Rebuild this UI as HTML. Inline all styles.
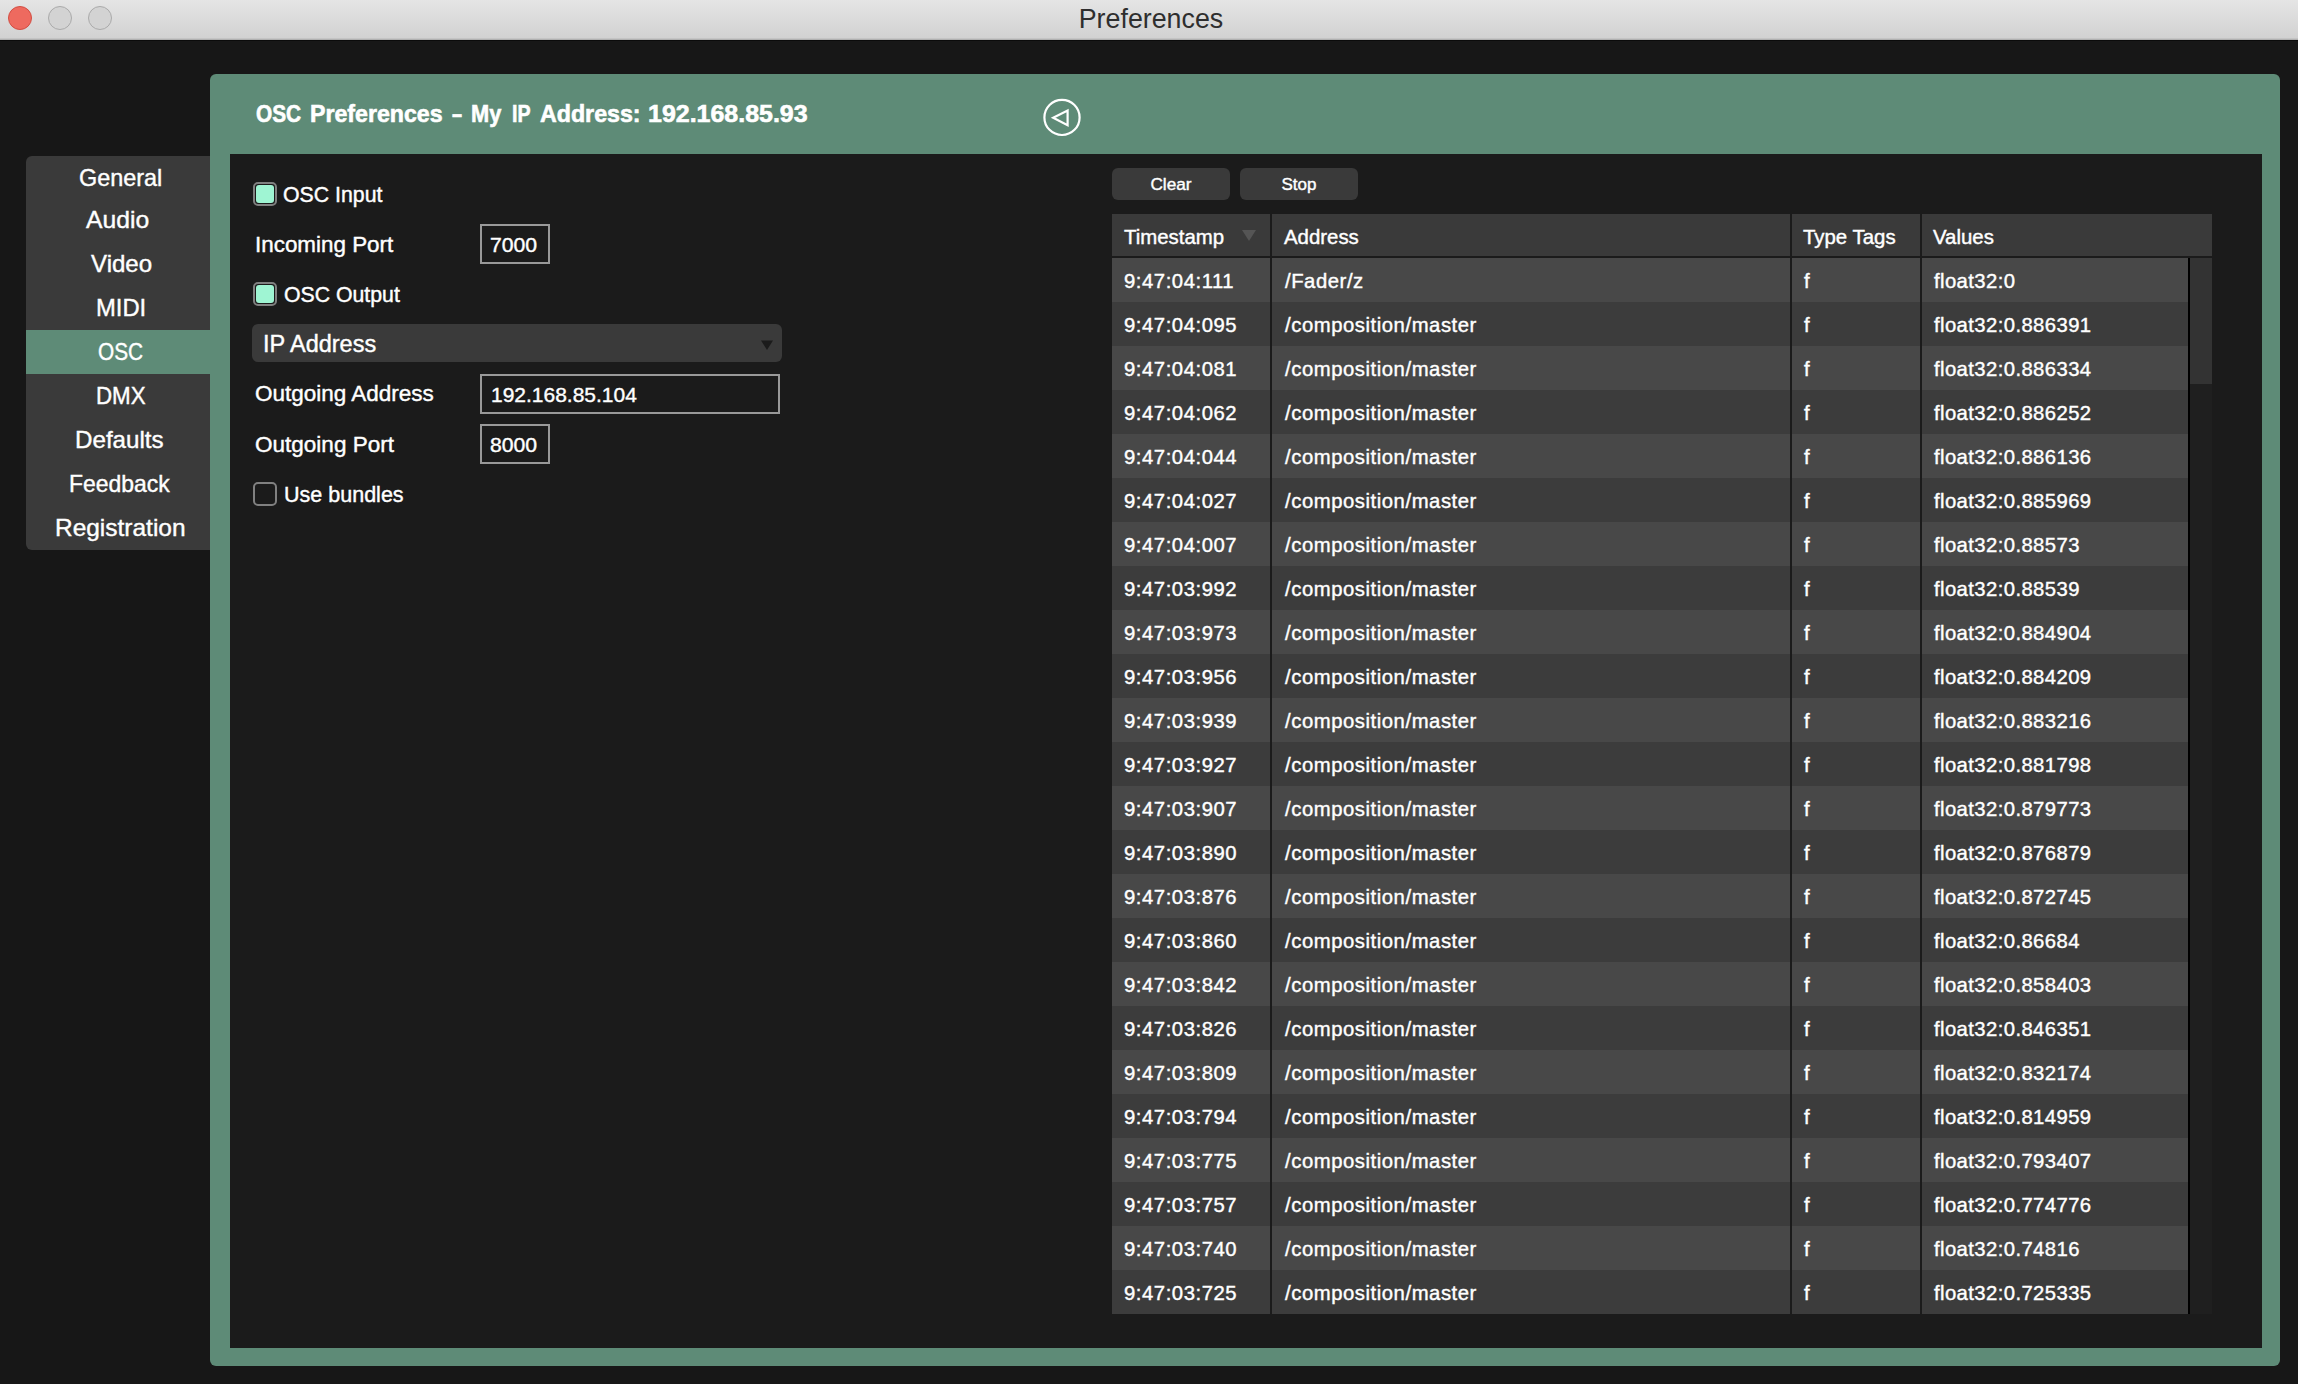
<!DOCTYPE html>
<html><head><meta charset="utf-8"><style>
html,body{margin:0;padding:0;}
body{width:2298px;height:1384px;background:#171717;position:relative;overflow:hidden;font-family:"Liberation Sans",sans-serif;}
.t{position:absolute;line-height:1;white-space:pre;-webkit-text-stroke:0.4px currentColor;}
.r{position:absolute;}
</style></head><body>
<div class="r" style="left:0;top:0;width:2298px;height:38px;background:linear-gradient(#e5e5e5,#d2d2d2)"></div>
<div class="r" style="left:0px;top:38px;width:2298px;height:1px;background:#c4c4c4;"></div>
<div class="r" style="left:0px;top:39px;width:2298px;height:1px;background:#b0b0b0;"></div>
<div class="r" style="left:0px;top:40px;width:2298px;height:1px;background:#0b0b0b;"></div>
<div class="r" style="left:8px;top:6px;width:22px;height:22px;border-radius:50%;background:#ee6a5f;border:1px solid #d24e43"></div>
<div class="r" style="left:48px;top:6px;width:22px;height:22px;border-radius:50%;background:#d3d3d3;border:1px solid #aaaaaa"></div>
<div class="r" style="left:88px;top:6px;width:22px;height:22px;border-radius:50%;background:#d3d3d3;border:1px solid #aaaaaa"></div>
<div class="t" style="left:851.00px;width:600px;text-align:center;top:5.91px;font-size:26.8px;color:#2e2e2e;font-weight:normal;-webkit-text-stroke:0;">Preferences</div>
<div class="r" style="left:210px;top:74px;width:2070px;height:1292px;background:#5e8b77;border-radius:6px;"></div>
<div class="r" style="left:230px;top:154px;width:2032px;height:1194px;background:#1b1b1b;"></div>
<div class="t" style="left:256.30px;top:101.68px;font-size:24px;color:#fff;font-weight:bold;-webkit-text-stroke:0.6px currentColor;transform:scaleX(0.8673);transform-origin:0 0;">OSC</div>
<div class="t" style="left:309.54px;top:101.68px;font-size:24px;color:#fff;font-weight:bold;-webkit-text-stroke:0.6px currentColor;transform:scaleX(0.9647);transform-origin:0 0;">Preferences</div>
<div class="t" style="left:452.10px;top:101.68px;font-size:24px;color:#fff;font-weight:bold;-webkit-text-stroke:0.6px currentColor;transform:scaleX(0.7538);transform-origin:0 0;">–</div>
<div class="t" style="left:471.49px;top:101.68px;font-size:24px;color:#fff;font-weight:bold;-webkit-text-stroke:0.6px currentColor;transform:scaleX(0.9091);transform-origin:0 0;">My</div>
<div class="t" style="left:512.18px;top:101.68px;font-size:24px;color:#fff;font-weight:bold;-webkit-text-stroke:0.6px currentColor;transform:scaleX(0.8182);transform-origin:0 0;">IP</div>
<div class="t" style="left:539.60px;top:101.68px;font-size:24px;color:#fff;font-weight:bold;-webkit-text-stroke:0.6px currentColor;transform:scaleX(0.9667);transform-origin:0 0;">Address:</div>
<div class="t" style="left:647.56px;top:101.68px;font-size:24px;color:#fff;font-weight:bold;-webkit-text-stroke:0.6px currentColor;transform:scaleX(1.0401);transform-origin:0 0;">192.168.85.93</div>
<svg class="r" style="left:1040px;top:95px" width="44" height="44" viewBox="0 0 44 44"><circle cx="22" cy="22.4" r="17.6" fill="none" stroke="#fff" stroke-width="2.2"/><path d="M13.2 22.8 L27.6 15.6 L27.6 30.2 Z" fill="none" stroke="#fff" stroke-width="2.2" stroke-linejoin="miter"/></svg>
<div class="r" style="left:26px;top:156px;width:184px;height:394px;background:#3a3a3a;border-radius:6px 0 0 6px;"></div>
<div class="r" style="left:26px;top:330px;width:184px;height:44px;background:#5e8b77;"></div>
<div class="t" style="left:79.02px;top:165.68px;font-size:24px;color:#fff;font-weight:normal;-webkit-text-stroke:0.4px currentColor;transform:scaleX(0.9759);transform-origin:0 0;">General</div>
<div class="t" style="left:86.10px;top:207.68px;font-size:24px;color:#fff;font-weight:normal;-webkit-text-stroke:0.4px currentColor;transform:scaleX(1.0279);transform-origin:0 0;">Audio</div>
<div class="t" style="left:90.80px;top:251.68px;font-size:24px;color:#fff;font-weight:normal;-webkit-text-stroke:0.4px currentColor;transform:scaleX(1.0033);transform-origin:0 0;">Video</div>
<div class="t" style="left:95.72px;top:295.68px;font-size:24px;color:#fff;font-weight:normal;-webkit-text-stroke:0.4px currentColor;transform:scaleX(0.9915);transform-origin:0 0;">MIDI</div>
<div class="t" style="left:98.13px;top:339.68px;font-size:24px;color:#fff;font-weight:normal;-webkit-text-stroke:0.4px currentColor;transform:scaleX(0.8660);transform-origin:0 0;">OSC</div>
<div class="t" style="left:95.54px;top:383.68px;font-size:24px;color:#fff;font-weight:normal;-webkit-text-stroke:0.4px currentColor;transform:scaleX(0.9294);transform-origin:0 0;">DMX</div>
<div class="t" style="left:75.49px;top:427.68px;font-size:24px;color:#fff;font-weight:normal;-webkit-text-stroke:0.4px currentColor;transform:scaleX(1.0070);transform-origin:0 0;">Defaults</div>
<div class="t" style="left:69.49px;top:471.68px;font-size:24px;color:#fff;font-weight:normal;-webkit-text-stroke:0.4px currentColor;transform:scaleX(0.9558);transform-origin:0 0;">Feedback</div>
<div class="t" style="left:55.06px;top:515.68px;font-size:24px;color:#fff;font-weight:normal;-webkit-text-stroke:0.4px currentColor;transform:scaleX(1.0192);transform-origin:0 0;">Registration</div>
<div class="r" style="left:253px;top:182px;width:20px;height:20px;border:2px solid #808080;border-radius:5px;background:#1b1b1b"><div style="position:absolute;left:1px;top:1px;width:18px;height:18px;border-radius:3px;background:#9ff5d3"></div></div>
<div class="t" style="left:283.29px;top:184.35px;font-size:21.2px;color:#fff;font-weight:normal;-webkit-text-stroke:0.4px currentColor;transform:scaleX(1.0051);transform-origin:0 0;">OSC Input</div>
<div class="t" style="left:254.66px;top:233.57px;font-size:22px;color:#fff;font-weight:normal;-webkit-text-stroke:0.4px currentColor;transform:scaleX(1.0187);transform-origin:0 0;">Incoming Port</div>
<div class="r" style="left:480px;top:224px;width:70px;height:40px;background:#1b1b1b;box-sizing:border-box;border:2px solid #999999;"></div>
<div class="t" style="left:490.39px;top:234.42px;font-size:21px;color:#fff;font-weight:normal;-webkit-text-stroke:0.4px currentColor;transform:scaleX(1.0089);transform-origin:0 0;">7000</div>
<div class="r" style="left:253px;top:282px;width:20px;height:20px;border:2px solid #808080;border-radius:5px;background:#1b1b1b"><div style="position:absolute;left:1px;top:1px;width:18px;height:18px;border-radius:3px;background:#9ff5d3"></div></div>
<div class="t" style="left:283.70px;top:284.05px;font-size:21.2px;color:#fff;font-weight:normal;-webkit-text-stroke:0.4px currentColor;transform:scaleX(1.0035);transform-origin:0 0;">OSC Output</div>
<div class="r" style="left:252px;top:324px;width:530px;height:38px;background:#3a3a3a;border-radius:6px;"></div>
<div class="t" style="left:262.86px;top:332.53px;font-size:23px;color:#fff;font-weight:normal;-webkit-text-stroke:0.4px currentColor;transform:scaleX(1.0213);transform-origin:0 0;">IP Address</div>
<svg class="r" style="left:760px;top:339px" width="14" height="12" viewBox="0 0 14 12"><path d="M1 1.5 L13 1.5 L7 11 Z" fill="#1b1b1b"/></svg>
<div class="t" style="left:255.39px;top:383.32px;font-size:22.3px;color:#fff;font-weight:normal;-webkit-text-stroke:0.4px currentColor;transform:scaleX(1.0091);transform-origin:0 0;">Outgoing Address</div>
<div class="r" style="left:480px;top:374px;width:300px;height:40px;background:#1b1b1b;box-sizing:border-box;border:2px solid #999999;"></div>
<div class="t" style="left:490.70px;top:384.02px;font-size:21px;color:#fff;font-weight:normal;-webkit-text-stroke:0.4px currentColor;transform:scaleX(0.9993);transform-origin:0 0;">192.168.85.104</div>
<div class="t" style="left:255.28px;top:433.67px;font-size:22px;color:#fff;font-weight:normal;-webkit-text-stroke:0.4px currentColor;transform:scaleX(1.0237);transform-origin:0 0;">Outgoing Port</div>
<div class="r" style="left:480px;top:424px;width:70px;height:40px;background:#1b1b1b;box-sizing:border-box;border:2px solid #999999;"></div>
<div class="t" style="left:489.89px;top:434.02px;font-size:21px;color:#fff;font-weight:normal;-webkit-text-stroke:0.4px currentColor;transform:scaleX(1.0089);transform-origin:0 0;">8000</div>
<div class="r" style="left:253px;top:482px;width:20px;height:20px;border:2px solid #808080;border-radius:5px;background:#1b1b1b"><div style="position:absolute;left:1px;top:1px;width:18px;height:18px;border-radius:3px;background:transparent"></div></div>
<div class="t" style="left:283.78px;top:484.05px;font-size:21.2px;color:#fff;font-weight:normal;-webkit-text-stroke:0.4px currentColor;transform:scaleX(1.0154);transform-origin:0 0;">Use bundles</div>
<div class="r" style="left:1112px;top:168px;width:118px;height:32px;background:#3a3a3a;border-radius:6px;"></div>
<div class="t" style="left:871.00px;width:600px;text-align:center;top:175.94px;font-size:17.2px;color:#fff;font-weight:normal;">Clear</div>
<div class="r" style="left:1240px;top:168px;width:118px;height:32px;background:#3a3a3a;border-radius:6px;"></div>
<div class="t" style="left:999.00px;width:600px;text-align:center;top:176.11px;font-size:17px;color:#fff;font-weight:normal;">Stop</div>
<div class="r" style="left:1112px;top:214px;width:1100px;height:42px;background:#3a3a3a;"></div>
<div class="r" style="left:1112px;top:256px;width:1076px;height:2px;background:#1b1b1b;"></div>
<div class="r" style="left:1270px;top:214px;width:2px;height:1100px;background:#1b1b1b;"></div>
<div class="r" style="left:1790px;top:214px;width:2px;height:1100px;background:#1b1b1b;"></div>
<div class="r" style="left:1920px;top:214px;width:2px;height:1100px;background:#1b1b1b;"></div>
<div class="t" style="left:1124.00px;top:226.73px;font-size:20.4px;color:#fff;font-weight:normal;">Timestamp</div>
<svg class="r" style="left:1241px;top:229px" width="16" height="13" viewBox="0 0 16 13"><path d="M1 1 L15 1 L8 12 Z" fill="#555"/></svg>
<div class="t" style="left:1284.00px;top:226.73px;font-size:20.4px;color:#fff;font-weight:normal;">Address</div>
<div class="t" style="left:1803.00px;top:226.73px;font-size:20.4px;color:#fff;font-weight:normal;">Type Tags</div>
<div class="t" style="left:1933.00px;top:226.73px;font-size:20.4px;color:#fff;font-weight:normal;">Values</div>
<div class="r" style="left:1112px;top:258px;width:158px;height:44px;background:#484848;"></div>
<div class="r" style="left:1272px;top:258px;width:518px;height:44px;background:#484848;"></div>
<div class="r" style="left:1792px;top:258px;width:128px;height:44px;background:#484848;"></div>
<div class="r" style="left:1922px;top:258px;width:266px;height:44px;background:#484848;"></div>
<div class="t" style="left:1124.00px;top:270.81px;font-size:20.3px;color:#fff;font-weight:normal;letter-spacing:0.55px;">9:47:04:111</div>
<div class="t" style="left:1285.00px;top:270.81px;font-size:20.3px;color:#fff;font-weight:normal;letter-spacing:0.55px;">/Fader/z</div>
<div class="t" style="left:1804.00px;top:270.81px;font-size:20.3px;color:#fff;font-weight:normal;letter-spacing:0.55px;">f</div>
<div class="t" style="left:1934.00px;top:270.81px;font-size:20.3px;color:#fff;font-weight:normal;letter-spacing:0.4px;">float32:0</div>
<div class="r" style="left:1112px;top:302px;width:158px;height:44px;background:#3c3c3c;"></div>
<div class="r" style="left:1272px;top:302px;width:518px;height:44px;background:#3c3c3c;"></div>
<div class="r" style="left:1792px;top:302px;width:128px;height:44px;background:#3c3c3c;"></div>
<div class="r" style="left:1922px;top:302px;width:266px;height:44px;background:#3c3c3c;"></div>
<div class="t" style="left:1124.00px;top:314.81px;font-size:20.3px;color:#fff;font-weight:normal;letter-spacing:0.55px;">9:47:04:095</div>
<div class="t" style="left:1285.00px;top:314.81px;font-size:20.3px;color:#fff;font-weight:normal;letter-spacing:0.55px;">/composition/master</div>
<div class="t" style="left:1804.00px;top:314.81px;font-size:20.3px;color:#fff;font-weight:normal;letter-spacing:0.55px;">f</div>
<div class="t" style="left:1934.00px;top:314.81px;font-size:20.3px;color:#fff;font-weight:normal;letter-spacing:0.4px;">float32:0.886391</div>
<div class="r" style="left:1112px;top:346px;width:158px;height:44px;background:#484848;"></div>
<div class="r" style="left:1272px;top:346px;width:518px;height:44px;background:#484848;"></div>
<div class="r" style="left:1792px;top:346px;width:128px;height:44px;background:#484848;"></div>
<div class="r" style="left:1922px;top:346px;width:266px;height:44px;background:#484848;"></div>
<div class="t" style="left:1124.00px;top:358.81px;font-size:20.3px;color:#fff;font-weight:normal;letter-spacing:0.55px;">9:47:04:081</div>
<div class="t" style="left:1285.00px;top:358.81px;font-size:20.3px;color:#fff;font-weight:normal;letter-spacing:0.55px;">/composition/master</div>
<div class="t" style="left:1804.00px;top:358.81px;font-size:20.3px;color:#fff;font-weight:normal;letter-spacing:0.55px;">f</div>
<div class="t" style="left:1934.00px;top:358.81px;font-size:20.3px;color:#fff;font-weight:normal;letter-spacing:0.4px;">float32:0.886334</div>
<div class="r" style="left:1112px;top:390px;width:158px;height:44px;background:#3c3c3c;"></div>
<div class="r" style="left:1272px;top:390px;width:518px;height:44px;background:#3c3c3c;"></div>
<div class="r" style="left:1792px;top:390px;width:128px;height:44px;background:#3c3c3c;"></div>
<div class="r" style="left:1922px;top:390px;width:266px;height:44px;background:#3c3c3c;"></div>
<div class="t" style="left:1124.00px;top:402.81px;font-size:20.3px;color:#fff;font-weight:normal;letter-spacing:0.55px;">9:47:04:062</div>
<div class="t" style="left:1285.00px;top:402.81px;font-size:20.3px;color:#fff;font-weight:normal;letter-spacing:0.55px;">/composition/master</div>
<div class="t" style="left:1804.00px;top:402.81px;font-size:20.3px;color:#fff;font-weight:normal;letter-spacing:0.55px;">f</div>
<div class="t" style="left:1934.00px;top:402.81px;font-size:20.3px;color:#fff;font-weight:normal;letter-spacing:0.4px;">float32:0.886252</div>
<div class="r" style="left:1112px;top:434px;width:158px;height:44px;background:#484848;"></div>
<div class="r" style="left:1272px;top:434px;width:518px;height:44px;background:#484848;"></div>
<div class="r" style="left:1792px;top:434px;width:128px;height:44px;background:#484848;"></div>
<div class="r" style="left:1922px;top:434px;width:266px;height:44px;background:#484848;"></div>
<div class="t" style="left:1124.00px;top:446.81px;font-size:20.3px;color:#fff;font-weight:normal;letter-spacing:0.55px;">9:47:04:044</div>
<div class="t" style="left:1285.00px;top:446.81px;font-size:20.3px;color:#fff;font-weight:normal;letter-spacing:0.55px;">/composition/master</div>
<div class="t" style="left:1804.00px;top:446.81px;font-size:20.3px;color:#fff;font-weight:normal;letter-spacing:0.55px;">f</div>
<div class="t" style="left:1934.00px;top:446.81px;font-size:20.3px;color:#fff;font-weight:normal;letter-spacing:0.4px;">float32:0.886136</div>
<div class="r" style="left:1112px;top:478px;width:158px;height:44px;background:#3c3c3c;"></div>
<div class="r" style="left:1272px;top:478px;width:518px;height:44px;background:#3c3c3c;"></div>
<div class="r" style="left:1792px;top:478px;width:128px;height:44px;background:#3c3c3c;"></div>
<div class="r" style="left:1922px;top:478px;width:266px;height:44px;background:#3c3c3c;"></div>
<div class="t" style="left:1124.00px;top:490.81px;font-size:20.3px;color:#fff;font-weight:normal;letter-spacing:0.55px;">9:47:04:027</div>
<div class="t" style="left:1285.00px;top:490.81px;font-size:20.3px;color:#fff;font-weight:normal;letter-spacing:0.55px;">/composition/master</div>
<div class="t" style="left:1804.00px;top:490.81px;font-size:20.3px;color:#fff;font-weight:normal;letter-spacing:0.55px;">f</div>
<div class="t" style="left:1934.00px;top:490.81px;font-size:20.3px;color:#fff;font-weight:normal;letter-spacing:0.4px;">float32:0.885969</div>
<div class="r" style="left:1112px;top:522px;width:158px;height:44px;background:#484848;"></div>
<div class="r" style="left:1272px;top:522px;width:518px;height:44px;background:#484848;"></div>
<div class="r" style="left:1792px;top:522px;width:128px;height:44px;background:#484848;"></div>
<div class="r" style="left:1922px;top:522px;width:266px;height:44px;background:#484848;"></div>
<div class="t" style="left:1124.00px;top:534.81px;font-size:20.3px;color:#fff;font-weight:normal;letter-spacing:0.55px;">9:47:04:007</div>
<div class="t" style="left:1285.00px;top:534.81px;font-size:20.3px;color:#fff;font-weight:normal;letter-spacing:0.55px;">/composition/master</div>
<div class="t" style="left:1804.00px;top:534.81px;font-size:20.3px;color:#fff;font-weight:normal;letter-spacing:0.55px;">f</div>
<div class="t" style="left:1934.00px;top:534.81px;font-size:20.3px;color:#fff;font-weight:normal;letter-spacing:0.4px;">float32:0.88573</div>
<div class="r" style="left:1112px;top:566px;width:158px;height:44px;background:#3c3c3c;"></div>
<div class="r" style="left:1272px;top:566px;width:518px;height:44px;background:#3c3c3c;"></div>
<div class="r" style="left:1792px;top:566px;width:128px;height:44px;background:#3c3c3c;"></div>
<div class="r" style="left:1922px;top:566px;width:266px;height:44px;background:#3c3c3c;"></div>
<div class="t" style="left:1124.00px;top:578.81px;font-size:20.3px;color:#fff;font-weight:normal;letter-spacing:0.55px;">9:47:03:992</div>
<div class="t" style="left:1285.00px;top:578.81px;font-size:20.3px;color:#fff;font-weight:normal;letter-spacing:0.55px;">/composition/master</div>
<div class="t" style="left:1804.00px;top:578.81px;font-size:20.3px;color:#fff;font-weight:normal;letter-spacing:0.55px;">f</div>
<div class="t" style="left:1934.00px;top:578.81px;font-size:20.3px;color:#fff;font-weight:normal;letter-spacing:0.4px;">float32:0.88539</div>
<div class="r" style="left:1112px;top:610px;width:158px;height:44px;background:#484848;"></div>
<div class="r" style="left:1272px;top:610px;width:518px;height:44px;background:#484848;"></div>
<div class="r" style="left:1792px;top:610px;width:128px;height:44px;background:#484848;"></div>
<div class="r" style="left:1922px;top:610px;width:266px;height:44px;background:#484848;"></div>
<div class="t" style="left:1124.00px;top:622.81px;font-size:20.3px;color:#fff;font-weight:normal;letter-spacing:0.55px;">9:47:03:973</div>
<div class="t" style="left:1285.00px;top:622.81px;font-size:20.3px;color:#fff;font-weight:normal;letter-spacing:0.55px;">/composition/master</div>
<div class="t" style="left:1804.00px;top:622.81px;font-size:20.3px;color:#fff;font-weight:normal;letter-spacing:0.55px;">f</div>
<div class="t" style="left:1934.00px;top:622.81px;font-size:20.3px;color:#fff;font-weight:normal;letter-spacing:0.4px;">float32:0.884904</div>
<div class="r" style="left:1112px;top:654px;width:158px;height:44px;background:#3c3c3c;"></div>
<div class="r" style="left:1272px;top:654px;width:518px;height:44px;background:#3c3c3c;"></div>
<div class="r" style="left:1792px;top:654px;width:128px;height:44px;background:#3c3c3c;"></div>
<div class="r" style="left:1922px;top:654px;width:266px;height:44px;background:#3c3c3c;"></div>
<div class="t" style="left:1124.00px;top:666.81px;font-size:20.3px;color:#fff;font-weight:normal;letter-spacing:0.55px;">9:47:03:956</div>
<div class="t" style="left:1285.00px;top:666.81px;font-size:20.3px;color:#fff;font-weight:normal;letter-spacing:0.55px;">/composition/master</div>
<div class="t" style="left:1804.00px;top:666.81px;font-size:20.3px;color:#fff;font-weight:normal;letter-spacing:0.55px;">f</div>
<div class="t" style="left:1934.00px;top:666.81px;font-size:20.3px;color:#fff;font-weight:normal;letter-spacing:0.4px;">float32:0.884209</div>
<div class="r" style="left:1112px;top:698px;width:158px;height:44px;background:#484848;"></div>
<div class="r" style="left:1272px;top:698px;width:518px;height:44px;background:#484848;"></div>
<div class="r" style="left:1792px;top:698px;width:128px;height:44px;background:#484848;"></div>
<div class="r" style="left:1922px;top:698px;width:266px;height:44px;background:#484848;"></div>
<div class="t" style="left:1124.00px;top:710.81px;font-size:20.3px;color:#fff;font-weight:normal;letter-spacing:0.55px;">9:47:03:939</div>
<div class="t" style="left:1285.00px;top:710.81px;font-size:20.3px;color:#fff;font-weight:normal;letter-spacing:0.55px;">/composition/master</div>
<div class="t" style="left:1804.00px;top:710.81px;font-size:20.3px;color:#fff;font-weight:normal;letter-spacing:0.55px;">f</div>
<div class="t" style="left:1934.00px;top:710.81px;font-size:20.3px;color:#fff;font-weight:normal;letter-spacing:0.4px;">float32:0.883216</div>
<div class="r" style="left:1112px;top:742px;width:158px;height:44px;background:#3c3c3c;"></div>
<div class="r" style="left:1272px;top:742px;width:518px;height:44px;background:#3c3c3c;"></div>
<div class="r" style="left:1792px;top:742px;width:128px;height:44px;background:#3c3c3c;"></div>
<div class="r" style="left:1922px;top:742px;width:266px;height:44px;background:#3c3c3c;"></div>
<div class="t" style="left:1124.00px;top:754.81px;font-size:20.3px;color:#fff;font-weight:normal;letter-spacing:0.55px;">9:47:03:927</div>
<div class="t" style="left:1285.00px;top:754.81px;font-size:20.3px;color:#fff;font-weight:normal;letter-spacing:0.55px;">/composition/master</div>
<div class="t" style="left:1804.00px;top:754.81px;font-size:20.3px;color:#fff;font-weight:normal;letter-spacing:0.55px;">f</div>
<div class="t" style="left:1934.00px;top:754.81px;font-size:20.3px;color:#fff;font-weight:normal;letter-spacing:0.4px;">float32:0.881798</div>
<div class="r" style="left:1112px;top:786px;width:158px;height:44px;background:#484848;"></div>
<div class="r" style="left:1272px;top:786px;width:518px;height:44px;background:#484848;"></div>
<div class="r" style="left:1792px;top:786px;width:128px;height:44px;background:#484848;"></div>
<div class="r" style="left:1922px;top:786px;width:266px;height:44px;background:#484848;"></div>
<div class="t" style="left:1124.00px;top:798.81px;font-size:20.3px;color:#fff;font-weight:normal;letter-spacing:0.55px;">9:47:03:907</div>
<div class="t" style="left:1285.00px;top:798.81px;font-size:20.3px;color:#fff;font-weight:normal;letter-spacing:0.55px;">/composition/master</div>
<div class="t" style="left:1804.00px;top:798.81px;font-size:20.3px;color:#fff;font-weight:normal;letter-spacing:0.55px;">f</div>
<div class="t" style="left:1934.00px;top:798.81px;font-size:20.3px;color:#fff;font-weight:normal;letter-spacing:0.4px;">float32:0.879773</div>
<div class="r" style="left:1112px;top:830px;width:158px;height:44px;background:#3c3c3c;"></div>
<div class="r" style="left:1272px;top:830px;width:518px;height:44px;background:#3c3c3c;"></div>
<div class="r" style="left:1792px;top:830px;width:128px;height:44px;background:#3c3c3c;"></div>
<div class="r" style="left:1922px;top:830px;width:266px;height:44px;background:#3c3c3c;"></div>
<div class="t" style="left:1124.00px;top:842.81px;font-size:20.3px;color:#fff;font-weight:normal;letter-spacing:0.55px;">9:47:03:890</div>
<div class="t" style="left:1285.00px;top:842.81px;font-size:20.3px;color:#fff;font-weight:normal;letter-spacing:0.55px;">/composition/master</div>
<div class="t" style="left:1804.00px;top:842.81px;font-size:20.3px;color:#fff;font-weight:normal;letter-spacing:0.55px;">f</div>
<div class="t" style="left:1934.00px;top:842.81px;font-size:20.3px;color:#fff;font-weight:normal;letter-spacing:0.4px;">float32:0.876879</div>
<div class="r" style="left:1112px;top:874px;width:158px;height:44px;background:#484848;"></div>
<div class="r" style="left:1272px;top:874px;width:518px;height:44px;background:#484848;"></div>
<div class="r" style="left:1792px;top:874px;width:128px;height:44px;background:#484848;"></div>
<div class="r" style="left:1922px;top:874px;width:266px;height:44px;background:#484848;"></div>
<div class="t" style="left:1124.00px;top:886.81px;font-size:20.3px;color:#fff;font-weight:normal;letter-spacing:0.55px;">9:47:03:876</div>
<div class="t" style="left:1285.00px;top:886.81px;font-size:20.3px;color:#fff;font-weight:normal;letter-spacing:0.55px;">/composition/master</div>
<div class="t" style="left:1804.00px;top:886.81px;font-size:20.3px;color:#fff;font-weight:normal;letter-spacing:0.55px;">f</div>
<div class="t" style="left:1934.00px;top:886.81px;font-size:20.3px;color:#fff;font-weight:normal;letter-spacing:0.4px;">float32:0.872745</div>
<div class="r" style="left:1112px;top:918px;width:158px;height:44px;background:#3c3c3c;"></div>
<div class="r" style="left:1272px;top:918px;width:518px;height:44px;background:#3c3c3c;"></div>
<div class="r" style="left:1792px;top:918px;width:128px;height:44px;background:#3c3c3c;"></div>
<div class="r" style="left:1922px;top:918px;width:266px;height:44px;background:#3c3c3c;"></div>
<div class="t" style="left:1124.00px;top:930.81px;font-size:20.3px;color:#fff;font-weight:normal;letter-spacing:0.55px;">9:47:03:860</div>
<div class="t" style="left:1285.00px;top:930.81px;font-size:20.3px;color:#fff;font-weight:normal;letter-spacing:0.55px;">/composition/master</div>
<div class="t" style="left:1804.00px;top:930.81px;font-size:20.3px;color:#fff;font-weight:normal;letter-spacing:0.55px;">f</div>
<div class="t" style="left:1934.00px;top:930.81px;font-size:20.3px;color:#fff;font-weight:normal;letter-spacing:0.4px;">float32:0.86684</div>
<div class="r" style="left:1112px;top:962px;width:158px;height:44px;background:#484848;"></div>
<div class="r" style="left:1272px;top:962px;width:518px;height:44px;background:#484848;"></div>
<div class="r" style="left:1792px;top:962px;width:128px;height:44px;background:#484848;"></div>
<div class="r" style="left:1922px;top:962px;width:266px;height:44px;background:#484848;"></div>
<div class="t" style="left:1124.00px;top:974.81px;font-size:20.3px;color:#fff;font-weight:normal;letter-spacing:0.55px;">9:47:03:842</div>
<div class="t" style="left:1285.00px;top:974.81px;font-size:20.3px;color:#fff;font-weight:normal;letter-spacing:0.55px;">/composition/master</div>
<div class="t" style="left:1804.00px;top:974.81px;font-size:20.3px;color:#fff;font-weight:normal;letter-spacing:0.55px;">f</div>
<div class="t" style="left:1934.00px;top:974.81px;font-size:20.3px;color:#fff;font-weight:normal;letter-spacing:0.4px;">float32:0.858403</div>
<div class="r" style="left:1112px;top:1006px;width:158px;height:44px;background:#3c3c3c;"></div>
<div class="r" style="left:1272px;top:1006px;width:518px;height:44px;background:#3c3c3c;"></div>
<div class="r" style="left:1792px;top:1006px;width:128px;height:44px;background:#3c3c3c;"></div>
<div class="r" style="left:1922px;top:1006px;width:266px;height:44px;background:#3c3c3c;"></div>
<div class="t" style="left:1124.00px;top:1018.81px;font-size:20.3px;color:#fff;font-weight:normal;letter-spacing:0.55px;">9:47:03:826</div>
<div class="t" style="left:1285.00px;top:1018.81px;font-size:20.3px;color:#fff;font-weight:normal;letter-spacing:0.55px;">/composition/master</div>
<div class="t" style="left:1804.00px;top:1018.81px;font-size:20.3px;color:#fff;font-weight:normal;letter-spacing:0.55px;">f</div>
<div class="t" style="left:1934.00px;top:1018.81px;font-size:20.3px;color:#fff;font-weight:normal;letter-spacing:0.4px;">float32:0.846351</div>
<div class="r" style="left:1112px;top:1050px;width:158px;height:44px;background:#484848;"></div>
<div class="r" style="left:1272px;top:1050px;width:518px;height:44px;background:#484848;"></div>
<div class="r" style="left:1792px;top:1050px;width:128px;height:44px;background:#484848;"></div>
<div class="r" style="left:1922px;top:1050px;width:266px;height:44px;background:#484848;"></div>
<div class="t" style="left:1124.00px;top:1062.81px;font-size:20.3px;color:#fff;font-weight:normal;letter-spacing:0.55px;">9:47:03:809</div>
<div class="t" style="left:1285.00px;top:1062.81px;font-size:20.3px;color:#fff;font-weight:normal;letter-spacing:0.55px;">/composition/master</div>
<div class="t" style="left:1804.00px;top:1062.81px;font-size:20.3px;color:#fff;font-weight:normal;letter-spacing:0.55px;">f</div>
<div class="t" style="left:1934.00px;top:1062.81px;font-size:20.3px;color:#fff;font-weight:normal;letter-spacing:0.4px;">float32:0.832174</div>
<div class="r" style="left:1112px;top:1094px;width:158px;height:44px;background:#3c3c3c;"></div>
<div class="r" style="left:1272px;top:1094px;width:518px;height:44px;background:#3c3c3c;"></div>
<div class="r" style="left:1792px;top:1094px;width:128px;height:44px;background:#3c3c3c;"></div>
<div class="r" style="left:1922px;top:1094px;width:266px;height:44px;background:#3c3c3c;"></div>
<div class="t" style="left:1124.00px;top:1106.81px;font-size:20.3px;color:#fff;font-weight:normal;letter-spacing:0.55px;">9:47:03:794</div>
<div class="t" style="left:1285.00px;top:1106.81px;font-size:20.3px;color:#fff;font-weight:normal;letter-spacing:0.55px;">/composition/master</div>
<div class="t" style="left:1804.00px;top:1106.81px;font-size:20.3px;color:#fff;font-weight:normal;letter-spacing:0.55px;">f</div>
<div class="t" style="left:1934.00px;top:1106.81px;font-size:20.3px;color:#fff;font-weight:normal;letter-spacing:0.4px;">float32:0.814959</div>
<div class="r" style="left:1112px;top:1138px;width:158px;height:44px;background:#484848;"></div>
<div class="r" style="left:1272px;top:1138px;width:518px;height:44px;background:#484848;"></div>
<div class="r" style="left:1792px;top:1138px;width:128px;height:44px;background:#484848;"></div>
<div class="r" style="left:1922px;top:1138px;width:266px;height:44px;background:#484848;"></div>
<div class="t" style="left:1124.00px;top:1150.81px;font-size:20.3px;color:#fff;font-weight:normal;letter-spacing:0.55px;">9:47:03:775</div>
<div class="t" style="left:1285.00px;top:1150.81px;font-size:20.3px;color:#fff;font-weight:normal;letter-spacing:0.55px;">/composition/master</div>
<div class="t" style="left:1804.00px;top:1150.81px;font-size:20.3px;color:#fff;font-weight:normal;letter-spacing:0.55px;">f</div>
<div class="t" style="left:1934.00px;top:1150.81px;font-size:20.3px;color:#fff;font-weight:normal;letter-spacing:0.4px;">float32:0.793407</div>
<div class="r" style="left:1112px;top:1182px;width:158px;height:44px;background:#3c3c3c;"></div>
<div class="r" style="left:1272px;top:1182px;width:518px;height:44px;background:#3c3c3c;"></div>
<div class="r" style="left:1792px;top:1182px;width:128px;height:44px;background:#3c3c3c;"></div>
<div class="r" style="left:1922px;top:1182px;width:266px;height:44px;background:#3c3c3c;"></div>
<div class="t" style="left:1124.00px;top:1194.81px;font-size:20.3px;color:#fff;font-weight:normal;letter-spacing:0.55px;">9:47:03:757</div>
<div class="t" style="left:1285.00px;top:1194.81px;font-size:20.3px;color:#fff;font-weight:normal;letter-spacing:0.55px;">/composition/master</div>
<div class="t" style="left:1804.00px;top:1194.81px;font-size:20.3px;color:#fff;font-weight:normal;letter-spacing:0.55px;">f</div>
<div class="t" style="left:1934.00px;top:1194.81px;font-size:20.3px;color:#fff;font-weight:normal;letter-spacing:0.4px;">float32:0.774776</div>
<div class="r" style="left:1112px;top:1226px;width:158px;height:44px;background:#484848;"></div>
<div class="r" style="left:1272px;top:1226px;width:518px;height:44px;background:#484848;"></div>
<div class="r" style="left:1792px;top:1226px;width:128px;height:44px;background:#484848;"></div>
<div class="r" style="left:1922px;top:1226px;width:266px;height:44px;background:#484848;"></div>
<div class="t" style="left:1124.00px;top:1238.81px;font-size:20.3px;color:#fff;font-weight:normal;letter-spacing:0.55px;">9:47:03:740</div>
<div class="t" style="left:1285.00px;top:1238.81px;font-size:20.3px;color:#fff;font-weight:normal;letter-spacing:0.55px;">/composition/master</div>
<div class="t" style="left:1804.00px;top:1238.81px;font-size:20.3px;color:#fff;font-weight:normal;letter-spacing:0.55px;">f</div>
<div class="t" style="left:1934.00px;top:1238.81px;font-size:20.3px;color:#fff;font-weight:normal;letter-spacing:0.4px;">float32:0.74816</div>
<div class="r" style="left:1112px;top:1270px;width:158px;height:44px;background:#3c3c3c;"></div>
<div class="r" style="left:1272px;top:1270px;width:518px;height:44px;background:#3c3c3c;"></div>
<div class="r" style="left:1792px;top:1270px;width:128px;height:44px;background:#3c3c3c;"></div>
<div class="r" style="left:1922px;top:1270px;width:266px;height:44px;background:#3c3c3c;"></div>
<div class="t" style="left:1124.00px;top:1282.81px;font-size:20.3px;color:#fff;font-weight:normal;letter-spacing:0.55px;">9:47:03:725</div>
<div class="t" style="left:1285.00px;top:1282.81px;font-size:20.3px;color:#fff;font-weight:normal;letter-spacing:0.55px;">/composition/master</div>
<div class="t" style="left:1804.00px;top:1282.81px;font-size:20.3px;color:#fff;font-weight:normal;letter-spacing:0.55px;">f</div>
<div class="t" style="left:1934.00px;top:1282.81px;font-size:20.3px;color:#fff;font-weight:normal;letter-spacing:0.4px;">float32:0.725335</div>
<div class="r" style="left:2188px;top:258px;width:2px;height:1056px;background:#000;"></div>
<div class="r" style="left:2190px;top:258px;width:22px;height:1056px;background:#1f1f1f;"></div>
<div class="r" style="left:2190px;top:258px;width:22px;height:126px;background:#333333;"></div>
</body></html>
